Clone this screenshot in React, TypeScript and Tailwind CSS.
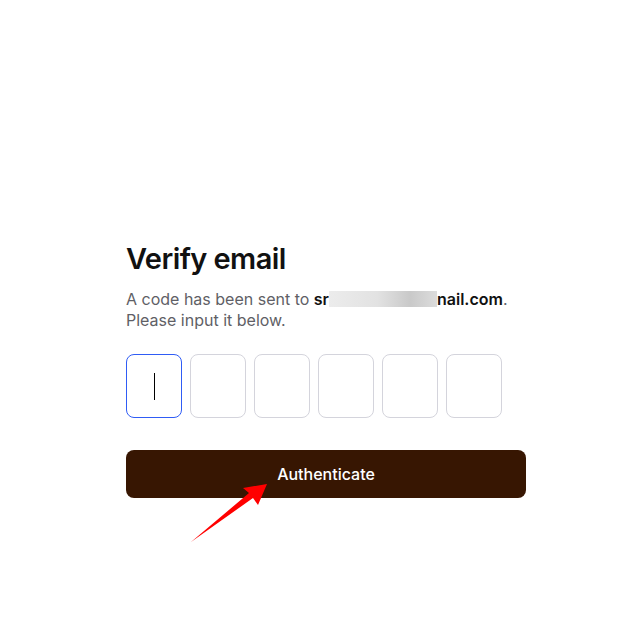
import { useState } from "react";

const digits = [0, 1, 2, 3, 4, 5];

export default function App() {
  const [code, setCode] = useState<string[]>(["", "", "", "", "", ""]);

  return (
    <main
      className="relative min-h-[624px] w-[638px] bg-white pl-[126px] pt-[241px] text-[#111111]"
      style={{ fontFamily: "Inter, 'Noto Sans', sans-serif" }}
    >
      <div className="flex w-[400px] flex-col">
        <h1 className="text-[29px] font-semibold leading-[36px] tracking-[-0.02em] text-[#111111]">
          Verify email
        </h1>
        <p className="mt-[12px] text-[16px] leading-[21px] text-[#5f5f66]">
          A code has been sent to{" "}
          <span className="font-semibold text-[#111111]">
            sr
            <span className="inline-block h-[16px] w-[108px] translate-y-[2px] bg-[linear-gradient(90deg,#ececec_0%,#e2e2e2_45%,#c9c9c9_75%,#dcdcdc_100%)]" />
            nail.com
          </span>
          .<br />
          Please input it below.
        </p>

        <div className="mt-[23px] flex gap-[8px]">
          {digits.map((i) => (
            <div
              key={i}
              className={`relative flex h-[64px] w-[56px] items-center justify-center rounded-[8px] border ${
                i === 0 ? "border-[#2f5cf5]" : "border-[#d4d4dc]"
              }`}
            >
              {i === 0 ? <span className="h-[27px] w-[1px] bg-black" /> : null}
              <input
                value={code[i]}
                maxLength={1}
                onChange={(e) => {
                  const next = [...code];
                  next[i] = e.target.value;
                  setCode(next);
                }}
                className="absolute inset-0 bg-transparent text-center text-[20px] outline-none"
                aria-label={`Digit ${i + 1}`}
              />
            </div>
          ))}
        </div>

        <button className="mt-[32px] h-[48px] w-[400px] rounded-[8px] bg-[#371602] text-[16px] font-medium text-white">
          Authenticate
        </button>
      </div>

      <svg className="pointer-events-none absolute left-0 top-0" width="638" height="624">
        <polygon points="267,484 243,488 249,493 191,542 253,498 258,505" fill="#ff0000" />
      </svg>
    </main>
  );
}
